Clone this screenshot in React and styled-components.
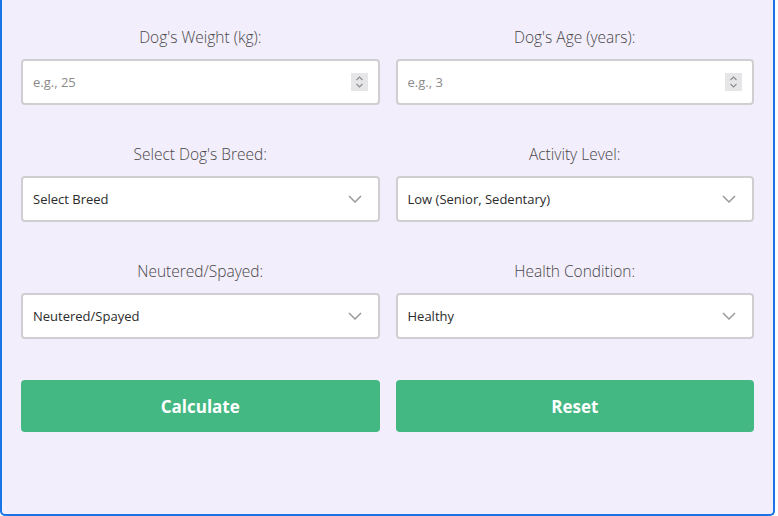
import React, { useState } from 'react';
import styled, { createGlobalStyle } from 'styled-components';

const GlobalStyle = createGlobalStyle`
  html, body {
    margin: 0;
    padding: 0;
    background: #ffffff;
  }
  body {
    font-family: 'Open Sans', 'Noto Sans', sans-serif;
  }
  * {
    box-sizing: border-box;
  }
`;

const Panel = styled.div`
  width: 775px;
  height: 516px;
  background: #f3eefc;
  border: 2px solid #1a74e6;
  border-top: none;
  border-radius: 0 0 5px 5px;
  padding: 26px 19px 0 19px;
`;

const FieldGrid = styled.div`
  display: grid;
  grid-template-columns: 1fr 1fr;
  column-gap: 16px;
  row-gap: 38px;
`;

const Field = styled.div`
  display: flex;
  flex-direction: column;
  gap: 11px;
`;

const Label = styled.label`
  display: block;
  height: 22px;
  text-align: center;
  font-size: 15.5px;
  line-height: 22px;
  font-weight: 300;
  color: #474747;
`;

const Box = styled.div`
  height: 46px;
  display: flex;
  align-items: center;
  background: #ffffff;
  border: 2px solid #cfcfd2;
  border-radius: 4px;
  padding: 0 10px 0 10px;
`;

const NumberInput = styled.input`
  flex: 1;
  min-width: 0;
  border: none;
  outline: none;
  background: transparent;
  font-family: inherit;
  font-size: 13px;
  color: #333;
  padding: 0;
  -moz-appearance: textfield;
  &::placeholder {
    color: #8a8a8a;
  }
  &::-webkit-outer-spin-button,
  &::-webkit-inner-spin-button {
    -webkit-appearance: none;
    margin: 0;
  }
`;

const Spinner = styled.span`
  width: 17px;
  height: 18px;
  background: #e6e6e8;
  display: flex;
  align-items: center;
  justify-content: center;
`;

const SelectControl = styled.select`
  flex: 1;
  min-width: 0;
  border: none;
  outline: none;
  background: transparent;
  appearance: none;
  -webkit-appearance: none;
  font-family: inherit;
  font-size: 13px;
  color: #2b2b2b;
  padding: 0;
`;

const Chevron = styled.span`
  display: flex;
  align-items: center;
  margin-right: 6px;
`;

const ButtonRow = styled.div`
  display: grid;
  grid-template-columns: 1fr 1fr;
  column-gap: 16px;
  margin-top: 41px;
`;

const ActionButton = styled.button`
  height: 52px;
  border: none;
  border-radius: 4px;
  background: #43b883;
  color: #ffffff;
  font-family: inherit;
  font-weight: 700;
  font-size: 17px;
  cursor: pointer;
`;

function SpinIcon() {
  return (
    <svg width="9" height="14" viewBox="0 0 9 14" fill="none" stroke="#8c8c8c" strokeWidth="1.1">
      <path d="M1.5 5 L4.5 2 L7.5 5" />
      <path d="M1.5 9 L4.5 12 L7.5 9" />
    </svg>
  );
}

function ChevronIcon() {
  return (
    <svg width="14" height="8" viewBox="0 0 14 8" fill="none" stroke="#9a9a9a" strokeWidth="1.5">
      <path d="M1 1 L7 7 L13 1" />
    </svg>
  );
}

function NumberField({ label, placeholder, id }) {
  return (
    <Field>
      <Label htmlFor={id}>{label}</Label>
      <Box>
        <NumberInput id={id} type="number" placeholder={placeholder} />
        <Spinner>
          <SpinIcon />
        </Spinner>
      </Box>
    </Field>
  );
}

function SelectField({ label, options, id }) {
  return (
    <Field>
      <Label htmlFor={id}>{label}</Label>
      <Box>
        <SelectControl id={id} defaultValue={options[0]}>
          {options.map((o) => (
            <option key={o}>{o}</option>
          ))}
        </SelectControl>
        <Chevron>
          <ChevronIcon />
        </Chevron>
      </Box>
    </Field>
  );
}

export default function App() {
  const [, setKey] = useState(0);
  return (
    <Panel>
      <GlobalStyle />
      <FieldGrid>
        <NumberField id="weight" label="Dog's Weight (kg):" placeholder="e.g., 25" />
        <NumberField id="age" label="Dog's Age (years):" placeholder="e.g., 3" />
        <SelectField id="breed" label="Select Dog's Breed:" options={['Select Breed']} />
        <SelectField
          id="activity"
          label="Activity Level:"
          options={['Low (Senior, Sedentary)', 'Moderate', 'High']}
        />
        <SelectField id="neutered" label="Neutered/Spayed:" options={['Neutered/Spayed', 'Intact']} />
        <SelectField id="health" label="Health Condition:" options={['Healthy', 'Overweight', 'Underweight']} />
      </FieldGrid>
      <ButtonRow>
        <ActionButton>Calculate</ActionButton>
        <ActionButton onClick={() => setKey((k) => k + 1)}>Reset</ActionButton>
      </ButtonRow>
    </Panel>
  );
}
